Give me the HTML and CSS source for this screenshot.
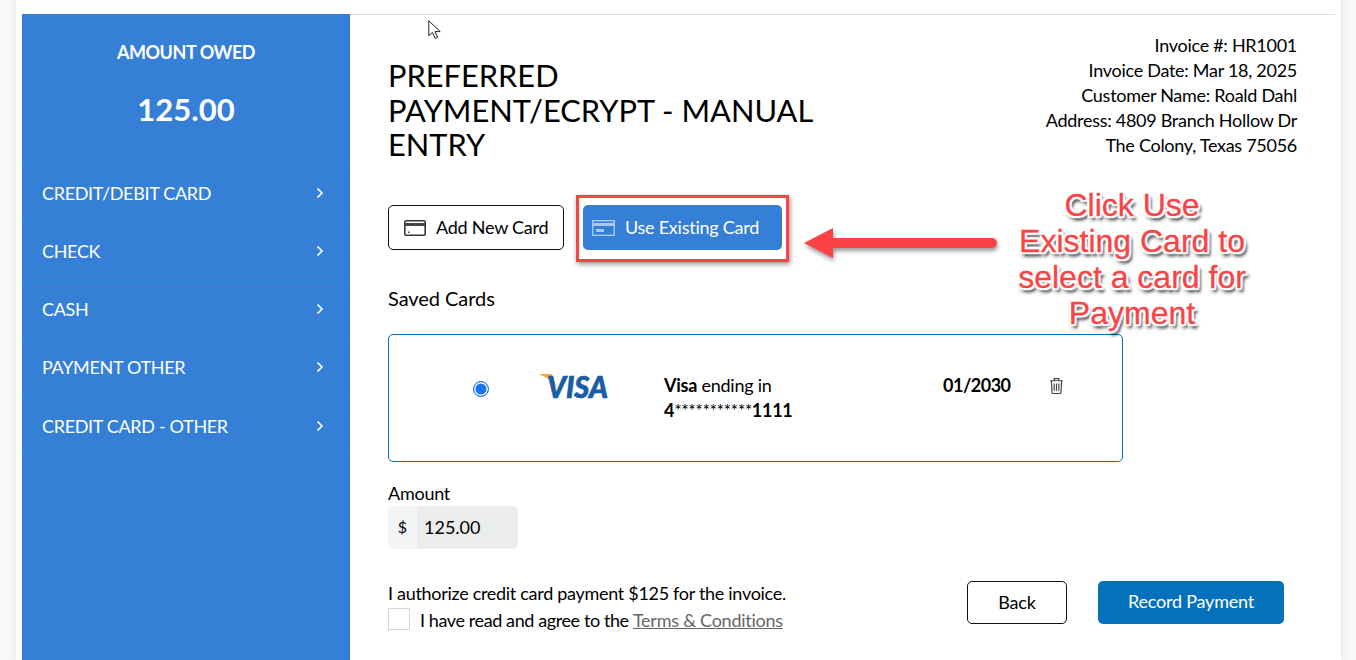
FILE: index.html
```html
<!DOCTYPE html>
<html lang="en">
<head>
<meta charset="utf-8">
<title>Payment</title>
<link rel="stylesheet" href="styles.css">
</head>
<body>
<div class="page">
  <div class="layout">
    <aside class="sidebar">
      <div class="owed">
        <div class="owed-label">AMOUNT OWED</div>
        <div class="owed-value">125.00</div>
      </div>
      <nav class="menu">
        <a class="menu-item">CREDIT/DEBIT CARD<svg class="chev" viewBox="0 0 8 12"><path d="M1.500 1.500 6 6l-4.500 4.500"/></svg></a>
        <a class="menu-item">CHECK<svg class="chev" viewBox="0 0 8 12"><path d="M1.500 1.500 6 6l-4.500 4.500"/></svg></a>
        <a class="menu-item">CASH<svg class="chev" viewBox="0 0 8 12"><path d="M1.500 1.500 6 6l-4.500 4.500"/></svg></a>
        <a class="menu-item">PAYMENT OTHER<svg class="chev" viewBox="0 0 8 12"><path d="M1.500 1.500 6 6l-4.500 4.500"/></svg></a>
        <a class="menu-item">CREDIT CARD - OTHER<svg class="chev" viewBox="0 0 8 12"><path d="M1.500 1.500 6 6l-4.500 4.500"/></svg></a>
      </nav>
    </aside>
    <main class="content">
      <header class="head">
        <h1 class="title">PREFERRED PAYMENT/ECRYPT - MANUAL ENTRY</h1>
        <div class="invoice">
          <div>Invoice #: HR1001</div>
          <div>Invoice Date: Mar 18, 2025</div>
          <div>Customer Name: Roald Dahl</div>
          <div>Address: 4809 Branch Hollow Dr</div>
          <div>The Colony, Texas 75056</div>
        </div>
      </header>
      <div class="tabs">
        <button class="tab tab-add">
          <svg class="card-icon" viewBox="0 0 22 16"><rect x="0.800" y="0.800" width="20.400" height="14.400" rx="1.500" fill="#fff" stroke="#333" stroke-width="1.600"/><rect x="1" y="3" width="20" height="3" fill="#444"/><rect x="4" y="11.500" width="1.500" height="1.500" fill="#444"/></svg>
          <span>Add New Card</span>
        </button>
        <button class="tab tab-use">
          <svg class="card-icon" viewBox="0 0 23 16"><rect x="0.700" y="0.700" width="21.600" height="14.600" fill="none" stroke="#a9c8ee" stroke-width="1.400"/><rect x="1" y="3" width="21" height="3" fill="#a9c8ee"/><rect x="4" y="9" width="8" height="3" fill="#a9c8ee"/></svg>
          <span>Use Existing Card</span>
        </button>
      </div>
      <div class="saved-label">Saved Cards</div>
      <section class="card-box">
        <span class="radio"></span>
        <svg class="visa" viewBox="0 -8 76 40">
          <path d="M0 0h11c1.500 0 2.500 1 3 2.500L17 13C13 7 7 3 0 0z" fill="#f2a91d"/>
          <text x="8" y="23.500" class="visa-text" textLength="61" lengthAdjust="spacingAndGlyphs">VISA</text>
        </svg>
        <div class="card-name"><b>Visa</b> ending in<br><b>4<span class="stars">***********</span>1111</b></div>
        <div class="card-exp">01/2030</div>
        <svg class="trash" viewBox="0 0 14 16"><path d="M1 3.500h12M4.800 3.300V1.500h4.400v1.800M2.200 3.500l.6 11.200c0 .5.400.8.800.8h6.800c.4 0 .8-.3.800-.8l.6-11.200M4.800 6v7M7 6v7M9.200 6v7" fill="none" stroke="#444" stroke-width="1.100"/></svg>
      </section>
      <label class="amount-label">Amount</label>
      <div class="amount">
        <span class="amount-prefix">$</span>
        <span class="amount-value">125.00</span>
      </div>
      <div class="foot">
        <div class="auth">
          <div>I authorize credit card payment $125 for the invoice.</div>
          <div class="agree"><span class="check"></span><span class="agree-text">I have read and agree to the </span><a class="terms">Terms &amp; Conditions</a></div>
        </div>
        <div class="actions">
          <button class="btn btn-back">Back</button>
          <button class="btn btn-record">Record Payment</button>
        </div>
      </div>
    </main>
  </div>
</div>

<svg class="cursor" viewBox="0 0 13 19"><path d="M.8.800v15l3.600-3.400 2.700 6 2.500-1.100-2.600-5.700h5.200z" fill="#fff" stroke="#222" stroke-width="1"/></svg>
<div class="highlight"></div>
<svg class="arrow" viewBox="0 0 196 34"><path d="M30 12h159a5 5 0 0 1 0 10H30v10L1 17 30 2z" fill="#fb4345"/></svg>
<div class="callout">Click Use<br>Existing Card to<br>select a card for<br>Payment</div>
</body>
</html>
```
FILE: styles.css
```css
* { box-sizing: border-box; }
html, body { margin: 0; height: 660px; overflow: hidden; }
body {
  background: #f8f8f8;
  font-family: Lato, "Liberation Sans", sans-serif;
  font-size: 18px;
  color: #000;
  position: relative;
}
.page {
  margin-left: 16px;
  width: 1325px;
  height: 660px;
  background: #fff;
  padding: 14px 6px 0;
  box-shadow: 0 0 8px rgba(0,0,0,.1);
}
.layout {
  display: flex;
  height: 646px;
  border-top: 1px solid #dedede;
}
.sidebar {
  width: 328px;
  margin-top: -1px;
  flex: none;
  background: #3580d6;
  color: #fff;
}
.owed {
  height: 151px;
  text-align: center;
  padding-top: 26px;
  border-bottom: 1px solid #2e8bdc;
}
.owed-label { font-weight: 700; font-size: 18px; line-height: 24px; letter-spacing: -0.450px; }
.owed-value { font-weight: 700; font-size: 31px; line-height: 36px; margin-top: 27px; }
.menu-item {
  display: flex;
  align-items: center;
  justify-content: space-between;
  height: 58px;
  padding: 0 26px 2px 20px;
  font-size: 18px;
  letter-spacing: -0.330px;
  border-bottom: 1px solid #2e8bdc;
}
.menu-item:last-child { padding-bottom: 0; }
.chev { width: 8px; height: 12px; fill: none; stroke: #fff; stroke-width: 1.600; }
.content { flex: 1; padding: 0 38px; min-width: 0; }
.head { display: flex; justify-content: space-between; align-items: flex-start; height: 190px; }
.title {
  margin: 44px 0 0;
  width: 430px;
  font-size: 30.800px;
  font-weight: 400;
  line-height: 34.500px;
}
.invoice { text-align: right; line-height: 25px; font-size: 18px; padding-top: 18px; letter-spacing: -0.280px; }
.tabs { display: flex; gap: 19px; }
.tab {
  display: flex;
  align-items: center;
  height: 45px;
  font: inherit;
  letter-spacing: -0.250px;
  border-radius: 5px;
  padding: 0;
}
.tab span { position: relative; top: -1px; }
.tab-add { width: 176px; background: #fff; border: 1px solid #111; color: #000; padding-left: 15px; gap: 10px; }
.tab-use { width: 199px; background: #3580d6; border: 0; color: #fff; padding-left: 9px; gap: 10px; }
.tab-add .card-icon { width: 22px; height: 16px; }
.tab-use .card-icon { width: 23px; height: 16px; }
.saved-label { margin-top: 36px; line-height: 24px; font-size: 20px; letter-spacing: -0.050px; }
.card-box {
  position: relative;
  margin-top: 24px;
  width: 735px;
  height: 128px;
  border: 1px solid #0671bb;
  border-radius: 5px;
}
.radio {
  position: absolute;
  left: 84px;
  top: 46px;
  width: 16px;
  height: 16px;
  border-radius: 50%;
  border: 1.500px solid #1a73f0;
  background: #1a73f0;
  box-shadow: inset 0 0 0 1.500px #fff;
}
.visa { position: absolute; left: 150px; top: 31px; width: 76px; height: 40px; }
.visa-text { font: italic 900 30px Lato, "Liberation Sans", sans-serif; fill: #1a5da6; stroke: #1a5da6; stroke-width: .7px; }
.card-name { position: absolute; left: 275px; top: 38px; line-height: 25px; letter-spacing: -0.250px; }
.stars { font-weight: 400; letter-spacing: -0.600px; }
.card-exp { position: absolute; left: 554px; top: 38px; font-weight: 700; line-height: 25px; letter-spacing: -0.500px; }
.trash { position: absolute; left: 660px; top: 42px; width: 15px; height: 17px; }
.amount-label { display: block; margin-top: 19px; line-height: 24px; letter-spacing: -0.250px; }
.amount { display: flex; width: 130px; height: 43px; margin-top: 1px; border-radius: 5px; overflow: hidden; line-height: 42px; }
.amount-prefix { width: 29px; background: #f3f4f5; text-align: center; font-size: 16px; }
.amount-value { flex: 1; background: #ebecee; padding-left: 7px; }
.foot { display: flex; justify-content: space-between; margin-top: 31px; }
.auth { line-height: 26px; letter-spacing: -0.300px; }
.agree { display: flex; align-items: center; white-space: pre; line-height: 28px; }
.agree-text { letter-spacing: -0.400px; }
.check { width: 22px; height: 22px; border: 1px solid #d5d5d5; margin-right: 10px; position: relative; top: -1px; }
.terms { color: #666; text-decoration: underline; letter-spacing: -0.250px; }
.actions { display: flex; gap: 31px; padding-right: 13px; margin-top: 1px; }
.btn { font: inherit; height: 43px; border-radius: 5px; letter-spacing: -0.200px; padding: 0 0 3px; }
.btn-back { width: 100px; background: #fff; border: 1px solid #111; color: #000; padding-bottom: 1px; }
.btn-record { width: 186px; background: #0671bb; border: 0; color: #fff; }

.cursor { position: absolute; left: 428px; top: 20px; width: 13px; height: 19px; }
.highlight {
  position: absolute;
  left: 576px; top: 195px;
  width: 213px; height: 67px;
  border: 3px solid #fb4345;
  box-shadow: 1px 2px 5px rgba(0,0,0,.45);
}
.arrow {
  position: absolute;
  left: 803px; top: 226px;
  width: 196px; height: 34px;
  filter: drop-shadow(1px 3px 2px rgba(0,0,0,.4));
}
.callout {
  position: absolute;
  left: 1010px; top: 187px;
  width: 244px;
  text-align: center;
  font-family: "Liberation Sans", Arial, sans-serif;
  font-size: 32px;
  line-height: 36px;
  color: #fb4345;
  text-shadow: 2px 0 1px #fff, -2px 0 1px #fff, 0 2px 1px #fff, 0 -2px 1px #fff, 2px 2px 1px #fff, -2px 2px 1px #fff, 2px -2px 1px #fff, -2px -2px 1px #fff, 3px 4px 3px rgba(0,0,0,.7), 1px 4px 4px rgba(0,0,0,.5);
  -webkit-text-stroke: 0.300px #fb4345;
}
```
